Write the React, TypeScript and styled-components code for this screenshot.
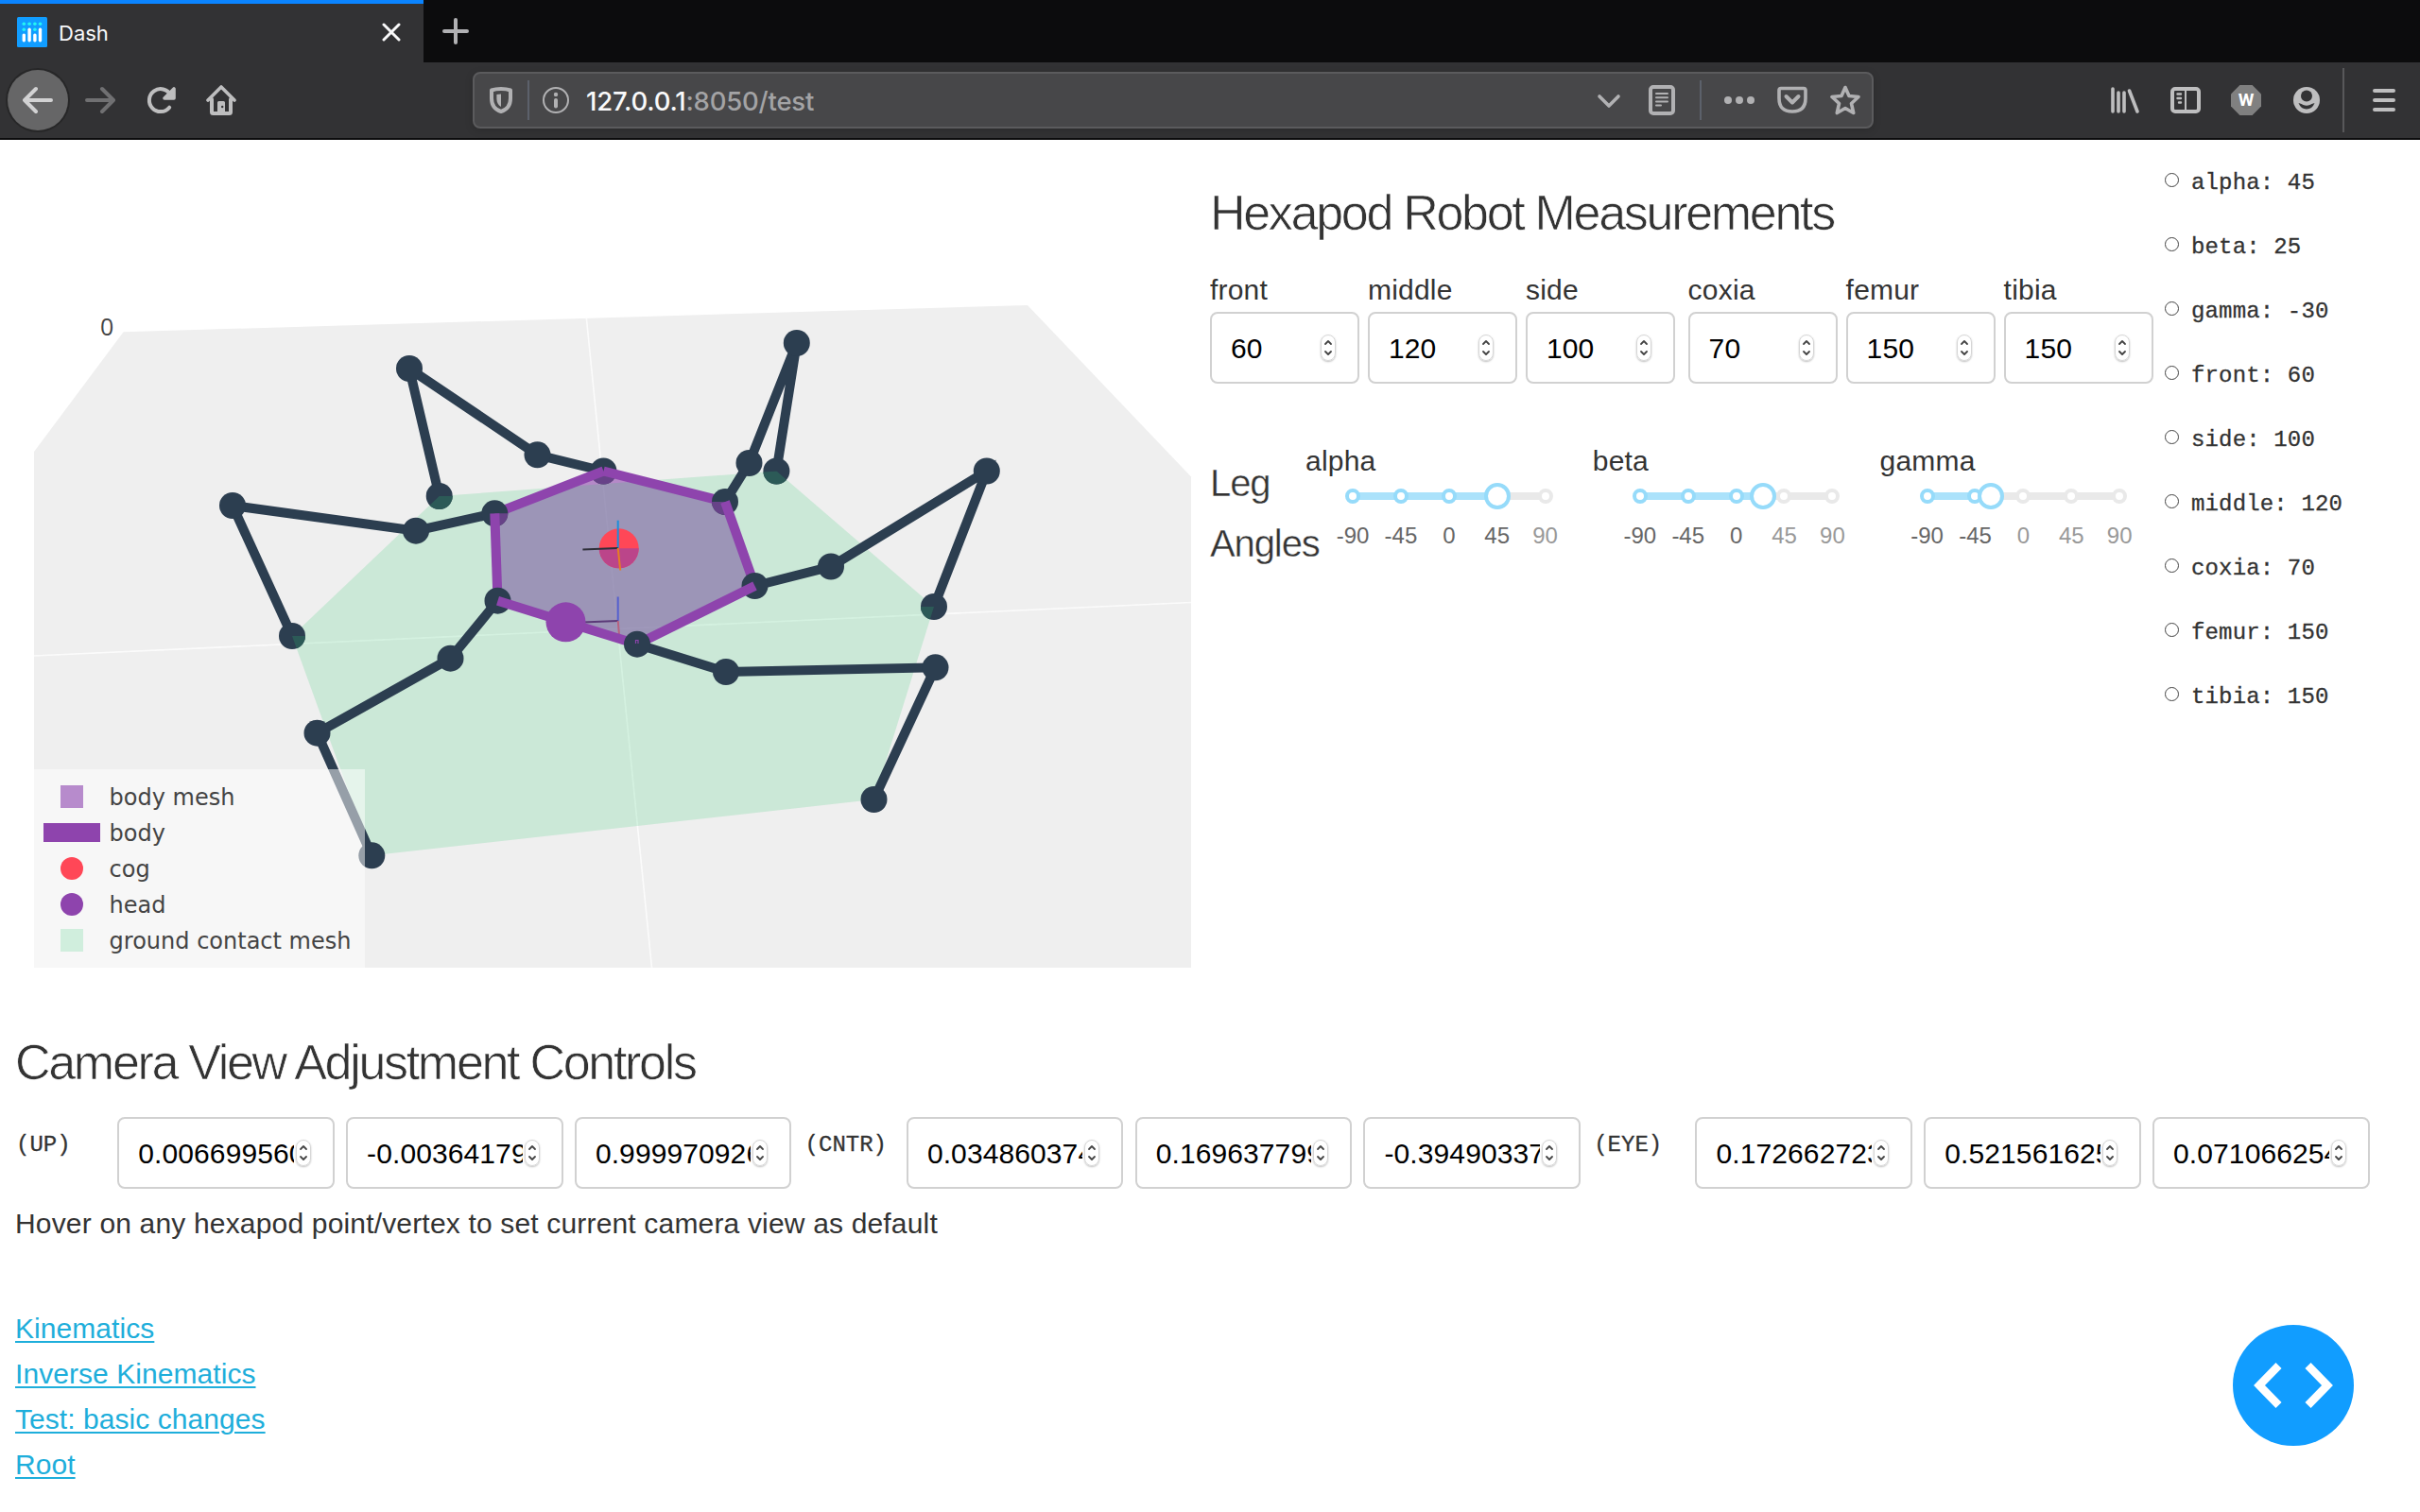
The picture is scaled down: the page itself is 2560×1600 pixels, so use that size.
import React from "react";
import styled, { createGlobalStyle } from "styled-components";

const sans = `"Liberation Sans", Arial, sans-serif`;
const mono = `"Liberation Mono", "Courier New", monospace`;
const ui = `Inter, "Liberation Sans", sans-serif`;

const GlobalStyle = createGlobalStyle`
  * { box-sizing: border-box; }
  body { margin: 0; background: #fff; color: #333; font-family: ${sans}; overflow: hidden; }
`;

/* ---------- browser chrome ---------- */

const Window = styled.div`
  width: 2560px;
  height: 1600px;
  overflow: hidden;
  background: #fff;
`;

const TabStrip = styled.div`
  display: flex;
  height: 66px;
  background: #0c0c0d;
`;

const Tab = styled.div`
  display: flex;
  align-items: center;
  width: 448px;
  height: 66px;
  padding: 0 24px 2px 18px;
  border-top: 4px solid #0a84ff;
  background: #323234;
`;

const TabTitle = styled.span`
  flex: 1;
  margin-left: 12px;
  padding-top: 1px;
  font: 400 22px/28px ${ui};
  letter-spacing: 0;
  color: #f9f9fa;
`;

const NewTab = styled.div`
  display: flex;
  align-items: center;
  justify-content: center;
  width: 68px;
  height: 66px;
`;

const Toolbar = styled.div`
  display: flex;
  align-items: center;
  height: 82px;
  padding-left: 8px;
  border-bottom: 2px solid #0c0c0d;
  background: #323234;
`;

const Slot = styled.div<{ $w?: number; $color?: string }>`
  display: flex;
  flex: none;
  align-items: center;
  justify-content: center;
  width: ${(p) => p.$w ?? 64}px;
  height: 56px;
  color: ${(p) => p.$color ?? "#bebebf"};
`;

const BackButton = styled.div`
  display: flex;
  flex: none;
  align-items: center;
  justify-content: center;
  width: 64px;
  height: 64px;
  margin-right: 2px;
  border-radius: 50%;
  background: #666667;
  box-shadow: 0 0 0 2px #272728;
  color: #d2d2d3;
`;

const UrlBar = styled.div`
  display: flex;
  flex: none;
  align-items: center;
  width: 1482px;
  height: 60px;
  margin: 0 234px;
  border: 2px solid #5b5b5d;
  border-radius: 8px;
  background: #474749;
  box-shadow: 0 2px 8px rgba(0, 0, 0, 0.15);
`;

const Separator = styled.i<{ $h: number; $m: string; $color: string }>`
  flex: none;
  width: 2px;
  height: ${(p) => p.$h}px;
  margin: ${(p) => p.$m};
  background: ${(p) => p.$color};
`;

const Address = styled.span`
  flex: 1;
  padding: 2px 0 0 4px;
  font: 450 27.5px/36px ${ui};
  letter-spacing: -0.2px;
  color: #a3a3a5;
  b { font-weight: 450; color: #f9f9fa; }
`;

type IconProps = { children: React.ReactNode; size?: number };
const Icon = ({ children, size = 32 }: IconProps) => (
  <svg width={size} height={size} viewBox="0 0 32 32" fill="none" stroke="currentColor" strokeWidth="4" strokeLinecap="round" strokeLinejoin="round">
    {children}
  </svg>
);

const DashFavicon = () => (
  <svg width="32" height="32" viewBox="0 0 32 32">
    <rect width="32" height="32" rx="1.5" fill="#119dff" />
    <g fill="#25f4f4">
      {[7.3, 13.1, 18.9, 24.5].map((x) => <circle key={x} cx={x} cy="7.3" r="1.8" />)}
      <circle cx="7.3" cy="13.2" r="1.8" />
      <circle cx="18.9" cy="13.2" r="1.8" />
    </g>
    <g fill="#fff">
      <rect x="5.6" y="17.4" width="3.4" height="9" rx="1.6" />
      <rect x="11.4" y="11.6" width="3.4" height="14.8" rx="1.6" />
      <rect x="17.2" y="17.4" width="3.4" height="9" rx="1.6" />
      <rect x="22.8" y="11.6" width="3.4" height="14.8" rx="1.6" />
    </g>
  </svg>
);

const Browser = () => (
  <>
    <TabStrip>
      <Tab>
        <DashFavicon />
        <TabTitle>Dash</TabTitle>
        <svg width="20" height="20" viewBox="0 0 20 20" stroke="#f9f9fa" strokeWidth="3" strokeLinecap="round">
          <path d="M2 2 18 18M18 2 2 18" />
        </svg>
      </Tab>
      <NewTab>
        <svg width="28" height="28" viewBox="0 0 28 28" stroke="#b1b1b3" strokeWidth="4" strokeLinecap="round">
          <path d="M14 2V26M2 14H26" />
        </svg>
      </NewTab>
    </TabStrip>
    <Toolbar>
      <BackButton>
        <Icon><path d="M2 16H30M14 4 2 16 14 28" /></Icon>
      </BackButton>
      <Slot $color="#707072">
        <Icon><path d="M2 16H30M18 4 30 16 18 28" /></Icon>
      </Slot>
      <Slot>
        <Icon>
          <path d="M25.2 23.7A12 12 0 1 1 26.5 10.5" />
          <path d="M30 4V14H20Z" strokeWidth="3.6" fill="currentColor" />
        </Icon>
      </Slot>
      <Slot>
        <Icon>
          <path d="M2 16 16 2 30 16" strokeWidth="3.6" />
          <path d="M6 15V28.5Q6 30 7.5 30H24.5Q26 30 26 28.5V15" />
          <path d="M13.5 29V18.5H18.5V29Z" fill="currentColor" strokeWidth="3" />
          <circle cx="17.2" cy="23" r="1.2" fill="#323234" stroke="none" />
        </Icon>
      </Slot>
      <UrlBar>
        <Slot $w={56} $color="#b1b1b3">
          <Icon>
            <path d="M16 4C12 4 8.500 4.600 6 5.500V14C6 21 9.500 26 16 28C22.500 26 26 21 26 14V5.500C23.500 4.600 20 4 16 4Z" />
            <path d="M16 9.400 11.400 10V14.500C11.400 18.500 13 21.300 16 23Z" fill="currentColor" stroke="none" />
          </Icon>
        </Slot>
        <Separator $h={42} $m="0" $color="#5c616b" />
        <Slot $w={56} $color="#b1b1b3">
          <Icon>
            <circle cx="16" cy="16" r="13" strokeWidth="2" />
            <circle cx="16" cy="10" r="2.200" fill="currentColor" stroke="none" />
            <path d="M16 16V22.500" />
          </Icon>
        </Slot>
        <Address><b>127.0.0.1</b>:8050/test</Address>
        <Slot $w={56} $color="#b1b1b3">
          <Icon><path d="M6 12 16 22 26 12" strokeWidth="3.600" /></Icon>
        </Slot>
        <Slot $w={56} $color="#b1b1b3">
          <Icon>
            <rect x="4" y="2" width="24" height="28" rx="3" />
            <path d="M10 9H22M10 13.200H22M10 17.400H22M10 21.600H15" strokeWidth="2" />
          </Icon>
        </Slot>
        <Separator $h={42} $m="0 12px" $color="#5c616b" />
        <Slot $w={56} $color="#b1b1b3">
          <Icon>
            <g fill="currentColor" stroke="none">
              <circle cx="4" cy="16" r="4" /><circle cx="16" cy="16" r="4" /><circle cx="28" cy="16" r="4" />
            </g>
          </Icon>
        </Slot>
        <Slot $w={56} $color="#b1b1b3">
          <Icon>
            <path d="M4 3.500H28Q30 3.500 30 5.500V14Q30 28 16 28Q2 28 2 14V5.500Q2 3.500 4 3.500Z" strokeWidth="3.600" />
            <path d="M9.500 12 16 18.500 22.500 12" />
          </Icon>
        </Slot>
        <Slot $w={56} $color="#b1b1b3">
          <Icon>
            <path d="M16 2.500 20 11.500 30 12.500 22.500 19.500 24.700 29.500 16 24.500 7.300 29.500 9.500 19.500 2 12.500 12 11.500Z" strokeWidth="3.600" />
          </Icon>
        </Slot>
      </UrlBar>
      <Slot>
        <Icon>
          <path d="M3 4V28M9 8V28M15 8V28M20.500 6 29 28" strokeWidth="3.600" />
        </Icon>
      </Slot>
      <Slot>
        <Icon>
          <rect x="2" y="4" width="28" height="24" rx="3" />
          <path d="M16 4V28" strokeWidth="2" />
          <path d="M7.500 9.500H11M7.500 14H11M9 18.500H11" strokeWidth="2.400" />
        </Icon>
      </Slot>
      <Slot>
        <svg width="32" height="32" viewBox="0 0 32 32">
          <path d="M9.400 0H22.600L32 9.400V22.600L22.600 32H9.400L0 22.600V9.400Z" fill="#808080" />
          <text x="16" y="22.300" textAnchor="middle" fontFamily="Roboto, sans-serif" fontWeight="700" fontSize="19" fill="#fff">W</text>
        </svg>
      </Slot>
      <Slot>
        <Icon>
          <circle cx="16" cy="16" r="14" fill="currentColor" stroke="none" />
          <circle cx="16" cy="11.500" r="6" fill="#323234" stroke="none" />
          <path d="M7.500 19Q11 20.200 12.500 21Q16 22.500 19.500 21Q21 20.200 24.500 19Q22 25.500 16 25.500Q10 25.500 7.500 19Z" fill="#323234" stroke="none" />
        </Icon>
      </Slot>
      <Separator $h={68} $m="0 2px 0 6px" $color="#58585a" />
      <Slot $w={80}>
        <Icon><path d="M6 6H26M6 16H26M6 26H26" /></Icon>
      </Slot>
    </Toolbar>
  </>
);

/* ---------- hexapod plot ---------- */

type Pt = [number, number];
const INK = "#2c3e50";
const PURPLE = "#8e44ad";

/* Each leg: body contact, coxia, femur (knee), tibia (foot tip). */
const legs: Record<string, Pt[]> = {
  rearLeft: [[638.4, 498.5], [568.5, 481.3], [433, 390], [464.7, 525]],
  midLeft: [[523.3, 543.3], [440, 561.7], [246, 535], [309, 673]],
  frontLeft: [[526.5, 635.7], [476.5, 696.7], [335.5, 775.7], [393.3, 905.3]],
  frontRight: [[674, 681.7], [768, 711], [989.5, 706.3], [924.5, 846]],
  midRight: [[798.5, 620], [879, 599.5], [1043.8, 498.5], [988, 642]],
  rearRight: [[767, 531], [792.5, 490], [842.8, 363], [821.4, 498.5]],
};

const pts = (list: Pt[]) => list.map((p) => p.join(",")).join(" ");
const order = ["rearLeft", "rearRight", "midRight", "frontRight", "frontLeft", "midLeft"];
const ground = order.map((k) => legs[k][3]);
const bodyRing = order.map((k) => legs[k][0]);

const Node = ({ at, r = 14, fill = INK }: { at: Pt; r?: number; fill?: string }) => (
  <circle cx={at[0]} cy={at[1]} r={r} fill={fill} />
);

const LowerHalf = ({ at, r = 14, fill, clip }: { at: Pt; r?: number; fill: string; clip: string }) => (
  <g clipPath={`url(#${clip})`}>
    <path d={`M${at[0] - r} ${at[1]}A${r} ${r} 0 0 0 ${at[0] + r} ${at[1]}Z`} fill={fill} />
  </g>
);

const Edge = ({ a, b }: { a: string; b: string }) => (
  <line x1={legs[a][0][0]} y1={legs[a][0][1]} x2={legs[b][0][0]} y2={legs[b][0][1]} stroke={PURPLE} strokeWidth="10" />
);

const PlotArea = styled.div`
  position: relative;
  flex: none;
  width: 1280px;
  height: 912px;
`;

const Scene = styled.svg`
  display: block;
`;

const Tick = styled.span`
  position: absolute;
  left: 106px;
  top: 183px;
  font: 400 25px/28px "Open Sans", sans-serif;
  color: #444;
`;

const Legend = styled.div`
  position: absolute;
  left: 36px;
  top: 666px;
  width: 350px;
  height: 210px;
  padding: 10px 0 0 10px;
  background: rgba(255, 255, 255, 0.5);
`;

const LegendRow = styled.div`
  display: flex;
  align-items: center;
  height: 38px;
  font: 400 24px/38px "DejaVu Sans", Verdana, sans-serif;
  letter-spacing: 0;
  color: #444;
  white-space: nowrap;
`;

const LegendKey = styled.span`
  display: flex;
  justify-content: center;
  width: 60px;
  margin-right: 9.6px;
`;

const LegendText = styled.span`
  padding-top: 2px;
`;

const Swatch = styled.i<{ $w: number; $h: number; $round?: boolean; $color: string }>`
  width: ${(p) => p.$w}px;
  height: ${(p) => p.$h}px;
  border-radius: ${(p) => (p.$round ? "50%" : "0")};
  background: ${(p) => p.$color};
`;

const legend = [
  { label: "body mesh", w: 24, h: 24, color: "#b78bcc" },
  { label: "body", w: 60, h: 20, color: PURPLE },
  { label: "cog", w: 24, h: 24, round: true, color: "#ff4757" },
  { label: "head", w: 24, h: 24, round: true, color: PURPLE },
  { label: "ground contact mesh", w: 24, h: 24, color: "#d0eedd" },
];

const Plot = () => {
  const cog: Pt = [654.7, 580.3];
  return (
    <PlotArea>
      <Scene width="1280" height="912" viewBox="0 148 1280 912">
        <defs>
          <clipPath id="ground"><polygon points={pts(ground)} /></clipPath>
          <clipPath id="body"><polygon points={pts(bodyRing)} /></clipPath>
        </defs>
        <polygon points="36,478 130.6,351.3 1087,323 1260,504.500 1260,1024 36,1024" fill="#efefef" />
        <g stroke="#fff" strokeWidth="1.600" opacity="0.8">
          <line x1="620.4" y1="337" x2="689.5" y2="1024" />
          <line x1="36" y1="694" x2="1260" y2="637.500" />
        </g>
        <polygon points={pts(bodyRing)} fill={PURPLE} fillOpacity="0.6" />
        <polygon points={pts(ground)} fill="#2ecc71" fillOpacity="0.19" />

        <g fill="none" stroke={INK} strokeWidth="10">
          {order.map((k) => <polyline key={k} points={pts(legs[k])} />)}
        </g>
        {order.map((k) => legs[k].slice(1).map((p, i) => <Node key={k + i} at={p} />))}
        {["rearLeft", "midLeft", "midRight", "rearRight"].map((k) => (
          <LowerHalf key={k} at={legs[k][3]} fill="#2c5a57" clip="ground" />
        ))}

        <Node at={legs.rearLeft[0]} />
        <LowerHalf at={legs.rearLeft[0]} fill="#674288" clip="body" />
        <Edge a="rearLeft" b="midLeft" />
        <Edge a="rearLeft" b="rearRight" />
        <Node at={legs.midLeft[0]} />
        <Node at={legs.rearRight[0]} />
        <LowerHalf at={legs.midLeft[0]} fill="#674288" clip="body" />
        <LowerHalf at={legs.rearRight[0]} fill="#674288" clip="body" />
        <Edge a="midLeft" b="frontLeft" />
        <Edge a="rearRight" b="midRight" />
        <Node at={legs.frontLeft[0]} />
        <Node at={legs.midRight[0]} />

        <Node at={cog} r={21} fill="#ff4757" />
        <LowerHalf at={cog} r={21} fill="#bb458a" clip="body" />
        <g strokeWidth="2" fill="none">
          <path d="M653.700 580V550.700" stroke="#1c8fdc" />
          <path d="M653.700 580 616.400 581.500" stroke="#2f2f3a" />
          <path d="M653.700 580 656.200 603.500" stroke="#e67e22" />
          <path d="M653.700 657V631.500" stroke="#5560cf" />
          <path d="M653.700 657 610 658.800" stroke="#5b3a78" />
          <path d="M653.700 657 655 672" stroke="#b8617f" />
        </g>

        <Edge a="frontLeft" b="frontRight" />
        <Edge a="midRight" b="frontRight" />
        <Node at={[598.5, 658.3]} r={21} fill={PURPLE} />
        <Node at={legs.frontRight[0]} />
        <path d="M672.500 681V677.500H675V681" stroke={PURPLE} strokeWidth="1.200" fill="none" />
      </Scene>
      <Tick>0</Tick>
      <Legend>
        {legend.map((l) => (
          <LegendRow key={l.label}>
            <LegendKey><Swatch $w={l.w} $h={l.h} $round={l.round} $color={l.color} /></LegendKey>
            <LegendText>{l.label}</LegendText>
          </LegendRow>
        ))}
      </Legend>
    </PlotArea>
  );
};

/* ---------- form controls ---------- */

const Heading = styled.h5<{ $ls: number }>`
  margin: 0;
  font: 400 52px/61px ${sans};
  height: 60px;
  letter-spacing: ${(p) => p.$ls}px;
  color: #333;
  white-space: nowrap;
  -webkit-text-stroke: 0.7px #fff;
`;

const Field = styled.div<{ $w: number }>`
  display: flex;
  align-items: center;
  width: ${(p) => p.$w}px;
  height: 76px;
  padding: 0 23px 0 20px;
  border: 2px solid #d1d1d1;
  border-radius: 8px;
  background: #fff;
`;

const FieldValue = styled.span`
  flex: 1;
  min-width: 0;
  margin-right: 2px;
  padding-top: 2px;
  overflow: hidden;
  font: 400 30px/36px ${sans};
  letter-spacing: 0.1px;
  color: #000;
  white-space: nowrap;
`;

const Stepper = styled.span`
  display: flex;
  flex: none;
  align-items: center;
  justify-content: center;
  width: 16px;
  height: 28px;
  border: 1px solid #d6d6d6;
  border-radius: 8px;
  box-shadow: 0 1px 2px rgba(0, 0, 0, 0.25);
`;

const NumberField = ({ value, width }: { value: string; width: number }) => (
  <Field $w={width}>
    <FieldValue>{value}</FieldValue>
    <Stepper>
      <svg width="10" height="20" viewBox="0 0 10 20" fill="none" stroke="#444" strokeWidth="1.8" strokeLinecap="round" strokeLinejoin="round">
        <path d="M2 6 5 3 8 6M2 14 5 17 8 14" />
      </svg>
    </Stepper>
  </Field>
);

const Top = styled.section`
  display: flex;
  height: 912px;
`;

const Measurements = styled.div`
  width: 1010px;
  padding-top: 47px;
`;

const FieldRow = styled.div`
  display: flex;
  gap: 13.6px;
  margin-top: 36px;
`;

const FieldGroup = styled.div`
  display: flex;
  gap: 9px;
`;

const Label = styled.label`
  display: block;
  height: 30px;
  font: 400 30px/32px ${sans};
  letter-spacing: 0.2px;
  color: #333;
  white-space: nowrap;
`;

const Labelled = styled.div`
  display: flex;
  flex-direction: column;
  gap: 9px;
`;

const Angles = styled.div`
  display: flex;
  margin-top: 66px;
`;

const AnglesTitle = styled.h6`
  flex: none;
  width: 101px;
  margin: 7px 0 0;
  font: 400 40px/64px ${sans};
  letter-spacing: -1.1px;
  color: #333;
  -webkit-text-stroke: 0.4px #fff;
`;

const SliderBox = styled.div`
  flex: none;
  width: 303.8px;
`;

const Rail = styled.div`
  position: relative;
  width: 203.5px;
  height: 8px;
  margin: 19px 0 0 50px;
  border-radius: 4px;
  background: #e9e9e9;
`;

const Fill = styled.div`
  height: 8px;
  border-radius: 4px;
  background: #abe2fb;
`;

const Dot = styled.i<{ $on: boolean }>`
  position: absolute;
  top: -4px;
  width: 16px;
  height: 16px;
  margin-left: -8px;
  border: 4px solid ${(p) => (p.$on ? "#96dbfa" : "#e9e9e9")};
  border-radius: 50%;
  background: #fff;
`;

const Handle = styled.i`
  position: absolute;
  top: -10px;
  width: 28px;
  height: 28px;
  margin-left: -14px;
  border: 4px solid #96dbfa;
  border-radius: 50%;
  background: #fff;
`;

const Marks = styled.div`
  display: flex;
  margin: 26px 0 0 24.6px;
`;

const Mark = styled.span<{ $on: boolean }>`
  width: 50.9px;
  font: 400 24px/24px ${sans};
  text-align: center;
  color: ${(p) => (p.$on ? "#666" : "#999")};
`;

const stops = [-90, -45, 0, 45, 90];

const Slider = ({ name, value }: { name: string; value: number }) => {
  const pct = (v: number) => `${((v + 90) / 180) * 100}%`;
  return (
    <SliderBox>
      <Label>{name}</Label>
      <Rail>
        <Fill style={{ width: pct(value) }} />
        {stops.map((s) => <Dot key={s} $on={s <= value} style={{ left: pct(s) }} />)}
        <Handle style={{ left: pct(value) }} />
      </Rail>
      <Marks>
        {stops.map((s) => <Mark key={s} $on={s <= value}>{s}</Mark>)}
      </Marks>
    </SliderBox>
  );
};

const Summary = styled.ul`
  margin: 0;
  padding: 11.6px 0 0;
  list-style: none;
`;

const SummaryItem = styled.li`
  display: flex;
  align-items: center;
  gap: 13px;
  height: 68px;
  font: 400 24px/68px ${mono};
  letter-spacing: 0.15px;
  color: #333;
  white-space: pre;
  -webkit-text-stroke: 0.3px #333;
  &::before {
    content: "";
    width: 13px;
    height: 13px;
    margin-bottom: 7px;
    border: 1.5px solid #444;
    border-radius: 50%;
  }
`;

const Camera = styled.section`
  padding: 34px 0 0 16px;
`;

const CameraRow = styled.div`
  display: flex;
  margin-top: 28px;
`;

const CameraGroup = styled.div`
  display: flex;
  gap: 12.3px;
  width: 834.6px;
`;

const CameraLabel = styled.span`
  width: 96px;
  font: 400 24px/24px ${mono};
  padding: 18px 0 0 1px;
  color: #333;
  -webkit-text-stroke: 0.3px #333;
`;

const Hint = styled.p`
  margin: 19px 0 0;
  font: 400 30px/36px ${sans};
  letter-spacing: 0.17px;
  color: #333;
`;

const Links = styled.nav`
  display: flex;
  flex-direction: column;
  align-items: flex-start;
  margin-top: 69px;
`;

const Link = styled.a`
  font: 400 30px/48px ${sans};
  letter-spacing: 0.06px;
  color: #1eaedb;
  text-decoration: underline;
  text-decoration-thickness: 2px;
  text-underline-offset: 3px;
`;

const DebugButton = styled.button`
  position: fixed;
  right: 70px;
  bottom: 70px;
  width: 128px;
  height: 128px;
  padding: 0;
  border: 0;
  border-radius: 50%;
  background: #119dff;
`;

const sizes = [
  [["front", "60"], ["middle", "120"], ["side", "100"]],
  [["coxia", "70"], ["femur", "150"], ["tibia", "150"]],
];

const summary = [
  "alpha: 45", "beta: 25", "gamma: -30", "front: 60", "side: 100",
  "middle: 120", "coxia: 70", "femur: 150", "tibia: 150",
];

const camera = [
  { name: "(UP)", values: ["0.006699560", "-0.003641799", "0.999970926"] },
  { name: "(CNTR)", values: ["0.034860374", "0.169637799", "-0.39490337"] },
  { name: "(EYE)", values: ["0.172662723", "0.521561625", "0.071066254"] },
];

export default function App() {
  return (
    <Window>
      <GlobalStyle />
      <Browser />
      <Top>
        <Plot />
        <Measurements>
          <Heading $ls={-2.3}>Hexapod Robot Measurements</Heading>
          <FieldRow>
            {sizes.map((group, i) => (
              <FieldGroup key={i}>
                {group.map(([name, value]) => (
                  <Labelled key={name}>
                    <Label>{name}</Label>
                    <NumberField value={value} width={158} />
                  </Labelled>
                ))}
              </FieldGroup>
            ))}
          </FieldRow>
          <Angles>
            <AnglesTitle>Leg Angles</AnglesTitle>
            <Slider name="alpha" value={45} />
            <Slider name="beta" value={25} />
            <Slider name="gamma" value={-30} />
          </Angles>
        </Measurements>
        <Summary>
          {summary.map((s) => <SummaryItem key={s}>{s}</SummaryItem>)}
        </Summary>
      </Top>
      <Camera>
        <Heading $ls={-2.3}>Camera View Adjustment Controls</Heading>
        <CameraRow>
          {camera.map((g) => (
            <CameraGroup key={g.name}>
              <CameraLabel>{g.name}</CameraLabel>
              {g.values.map((v) => <NumberField key={v} value={v} width={229.5} />)}
            </CameraGroup>
          ))}
        </CameraRow>
        <Hint>Hover on any hexapod point/vertex to set current camera view as default</Hint>
        <Links>
          {["Kinematics", "Inverse Kinematics", "Test: basic changes", "Root"].map((t) => <Link key={t}>{t}</Link>)}
        </Links>
      </Camera>
      <DebugButton aria-label="debug">
        <svg width="128" height="128" viewBox="0 0 128 128" fill="none" stroke="#fff" strokeWidth="8.500">
          <path d="M48.500 43 28 64 48.500 85M79.500 43 100 64 79.500 85" />
        </svg>
      </DebugButton>
    </Window>
  );
}
